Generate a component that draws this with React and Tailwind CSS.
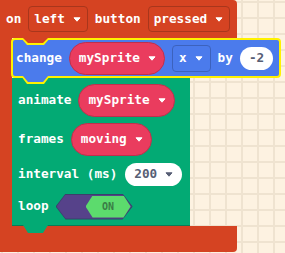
import React from 'react';

// small dropdown caret used by every field
function Caret({ color = '#ffffff' }) {
    return (
        <svg width="8" height="5" viewBox="0 0 8 5" className="ml-[8px] shrink-0">
            <path d="M1 0.8 H7 L4 4.2 Z" fill={color} stroke={color} strokeWidth="1" strokeLinejoin="round" />
        </svg>
    );
}

function VarPill({ name }) {
    return (
        <div className="flex h-[33px] shrink-0 items-center rounded-full border border-[#bf304c] bg-[#ea3c5e] pl-[9px] pr-[8px]">
            <span>{name}</span>
            <Caret />
        </div>
    );
}

function NumPill({ value, caret }) {
    return (
        <div className="flex h-[23px] shrink-0 items-center rounded-full bg-white px-[9px] text-[#575e75]">
            <span>{value}</span>
            {caret && <Caret color="#575e75" />}
        </div>
    );
}

export default function App() {
    return (
        <div className="h-[253px] w-[285px] overflow-hidden bg-[#fdf2e1] bg-[image:linear-gradient(to_right,#efe3d0_2px,transparent_2px),linear-gradient(to_bottom,#efe3d0_2px,transparent_2px)] bg-size-[16px_16px] bg-position-[1px_1px] font-['DejaVu_Sans_Mono',monospace] text-[12.7px] leading-none font-bold text-white">
            <div className="flex w-[237px] flex-col">
                {/* hat row */}
                <div className="flex h-[38px] items-center gap-[7px] rounded-tr-[4px] bg-[#d54322] pl-[6px]">
                    <span>on</span>
                    <div className="flex h-[26px] items-center rounded-[4px] border border-[#a8361c] pl-[5px] pr-[6px]">
                        <span>left</span>
                        <Caret />
                    </div>
                    <span>button</span>
                    <div className="flex h-[26px] items-center rounded-[4px] border border-[#a8361c] pl-[5px] pr-[6px]">
                        <span>pressed</span>
                        <Caret />
                    </div>
                </div>

                <div className="flex">
                    <div className="w-[12px] shrink-0 bg-[#d54322]" />
                    <div className="flex flex-col items-start">
                        {/* selected sprite block */}
                        <div className="relative z-10 -ml-[1px] flex h-[40px] w-[270px] items-center gap-[7px] rounded-[4px] border-2 border-[#fff200] bg-[#4b7bec] pl-[3px]">
                            <div className="absolute -top-[2px] left-[8px] h-[7px] w-[29px] bg-[#fff200] [clip-path:polygon(0_0,100%_0,calc(100%_-_6px)_100%,6px_100%)]" />
                            <div className="absolute -top-[2px] left-[10px] h-[5px] w-[25px] bg-[#d54322] [clip-path:polygon(0_0,100%_0,calc(100%_-_5px)_100%,5px_100%)]" />
                            <div className="absolute top-full left-[8px] h-[8px] w-[29px] bg-[#fff200] [clip-path:polygon(0_0,100%_0,calc(100%_-_6px)_100%,6px_100%)]" />
                            <div className="absolute top-full left-[10px] h-[6px] w-[25px] bg-[#4b7bec] [clip-path:polygon(0_0,100%_0,calc(100%_-_5px)_100%,5px_100%)]" />
                            <span>change</span>
                            <VarPill name="mySprite" />
                            <div className="flex h-[27px] shrink-0 items-center rounded-[4px] border border-[#3c62bd] pl-[6px] pr-[7px]">
                                <span>x</span>
                                <Caret />
                            </div>
                            <span>by</span>
                            <NumPill value="-2" />
                        </div>

                        {/* animation block */}
                        <div className="relative flex w-[178px] flex-col gap-[6px] border-b border-[#0b7a56] bg-[#03aa74] pt-[6px] pb-[5px] pl-[6px]">
                            <div className="absolute top-full left-[11px] h-[8px] w-[25px] bg-[#03aa74] [clip-path:polygon(0_0,100%_0,calc(100%_-_5px)_100%,5px_100%)]" />
                            <div className="flex h-[33px] items-center gap-[7px]">
                                <span>animate</span>
                                <VarPill name="mySprite" />
                            </div>
                            <div className="flex h-[33px] items-center gap-[7px]">
                                <span>frames</span>
                                <VarPill name="moving" />
                            </div>
                            <div className="flex h-[25px] items-center gap-[8px]">
                                <span>interval (ms)</span>
                                <NumPill value="200" caret />
                            </div>
                            <div className="flex h-[27px] items-center gap-[7px]">
                                <span>loop</span>
                                <div className="relative h-[26px] w-[77px] shrink-0">
                                    <div className="absolute inset-0 bg-[#3b3f6b] [clip-path:polygon(10px_0,calc(100%_-_10px)_0,100%_50%,calc(100%_-_10px)_100%,10px_100%,0_50%)]" />
                                    <div className="absolute inset-[1px] bg-[#56428a] [clip-path:polygon(9px_0,calc(100%_-_9px)_0,100%_50%,calc(100%_-_9px)_100%,9px_100%,0_50%)]" />
                                    <div className="absolute top-[2px] right-[2px] flex h-[22px] w-[45px] items-center justify-center bg-[#5cdb6d] text-[10px] text-[#3a7d46] [clip-path:polygon(7px_0,calc(100%_-_7px)_0,100%_50%,calc(100%_-_7px)_100%,7px_100%,0_50%)]">
                                        ON
                                    </div>
                                </div>
                            </div>
                        </div>
                    </div>
                </div>

                <div className="h-[26px] rounded-br-[4px] bg-[#d54322]" />
            </div>
        </div>
    );
}
